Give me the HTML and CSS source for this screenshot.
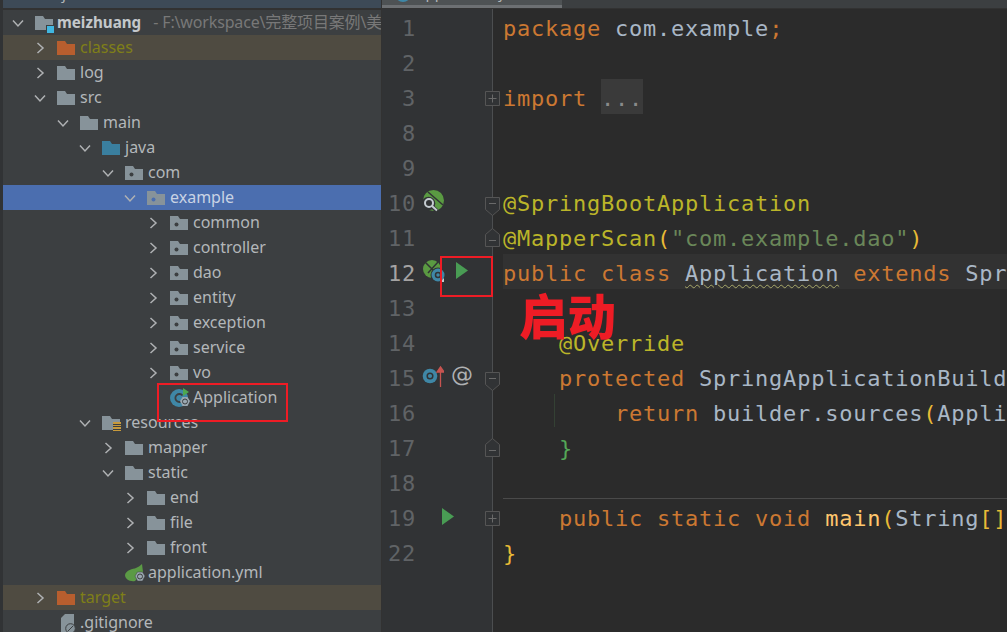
FILE: index.html
```html
<!DOCTYPE html>
<html lang="zh">
<head>
<meta charset="utf-8">
<title>Application</title>
<link rel="stylesheet" href="styles.css">
</head>
<body>
<svg class="defs" width="0" height="0" aria-hidden="true">
  <symbol id="folder" viewBox="0 0 18 14"><path d="M0 0h8l2 3h8v11H0z" fill="currentColor"/></symbol>
  <symbol id="pkg" viewBox="0 0 18 14"><path d="M0 0h8l2 3h8v11H0z" fill="#87939a"/><circle cx="6.500" cy="8.500" r="2" fill="var(--dot,#3c3f41)"/></symbol>
  <symbol id="chev-r" viewBox="0 0 12 12"><path d="M3.500 1l5.500 5-5.500 5" fill="none" stroke="#afb1b3" stroke-width="1.500"/></symbol>
  <symbol id="chev-d" viewBox="0 0 12 12"><path d="M1 3.500l5 5.500 5-5.500" fill="none" stroke="#afb1b3" stroke-width="1.500"/></symbol>
  <symbol id="fold-open" viewBox="0 0 15 19"><path d="M.5.500h14v12l-7 6-7-6z" fill="#313335" stroke="#555"/><path d="M4 6.500h7" stroke="#6a6a6a"/></symbol>
  <symbol id="fold-close" viewBox="0 0 15 19"><path d="M.5 18.500h14v-12l-7-6-7 6z" fill="#313335" stroke="#555"/><path d="M4 12.500h7" stroke="#6a6a6a"/></symbol>
  <symbol id="fold-plus" viewBox="0 0 15 15"><path d="M.5.500h14v14H.5z" fill="#313335" stroke="#555"/><path d="M3.500 7.500h8M7.500 3.500v8" stroke="#6a6a6a"/></symbol>
</svg>
<div class="app">
  <aside class="sidebar">
    <div class="sb-top"><span class="sb-title">Project</span></div>
    <div class="tree">
      <div class="row d0"><svg class="chev"><use href="#chev-d"/></svg><span class="ic"><svg class="folder grey"><use href="#folder"/></svg><i class="module"></i></span><b class="root">meizhuang</b><span class="path">- F:\workspace\完整项目案例\美妆</span></div>
      <div class="row d1 excl"><svg class="chev"><use href="#chev-r"/></svg><svg class="folder orange"><use href="#folder"/></svg><span class="olive">classes</span></div>
      <div class="row d1"><svg class="chev"><use href="#chev-r"/></svg><svg class="folder grey"><use href="#folder"/></svg><span>log</span></div>
      <div class="row d1"><svg class="chev"><use href="#chev-d"/></svg><svg class="folder grey"><use href="#folder"/></svg><span>src</span></div>
      <div class="row d2"><svg class="chev"><use href="#chev-d"/></svg><svg class="folder grey"><use href="#folder"/></svg><span>main</span></div>
      <div class="row d3"><svg class="chev"><use href="#chev-d"/></svg><svg class="folder blue"><use href="#folder"/></svg><span>java</span></div>
      <div class="row d4"><svg class="chev"><use href="#chev-d"/></svg><svg class="folder"><use href="#pkg"/></svg><span>com</span></div>
      <div class="row d5 sel"><svg class="chev"><use href="#chev-d"/></svg><svg class="folder"><use href="#pkg"/></svg><span>example</span></div>
      <div class="row d6"><svg class="chev"><use href="#chev-r"/></svg><svg class="folder"><use href="#pkg"/></svg><span>common</span></div>
      <div class="row d6"><svg class="chev"><use href="#chev-r"/></svg><svg class="folder"><use href="#pkg"/></svg><span>controller</span></div>
      <div class="row d6"><svg class="chev"><use href="#chev-r"/></svg><svg class="folder"><use href="#pkg"/></svg><span>dao</span></div>
      <div class="row d6"><svg class="chev"><use href="#chev-r"/></svg><svg class="folder"><use href="#pkg"/></svg><span>entity</span></div>
      <div class="row d6"><svg class="chev"><use href="#chev-r"/></svg><svg class="folder"><use href="#pkg"/></svg><span>exception</span></div>
      <div class="row d6"><svg class="chev"><use href="#chev-r"/></svg><svg class="folder"><use href="#pkg"/></svg><span>service</span></div>
      <div class="row d6"><svg class="chev"><use href="#chev-r"/></svg><svg class="folder"><use href="#pkg"/></svg><span>vo</span></div>
      <div class="row d6"><span class="chev"></span>
        <svg class="file-ic" viewBox="0 0 20 20"><circle cx="9" cy="10" r="9" fill="#3f87a6"/><path d="M12.500 7.500a4 4 0 1 0 0 5" fill="none" stroke="#3c3f41" stroke-width="1.800"/><path d="M13 0l6 4-6 4z" fill="#4fa84f"/><path d="M12.500 9h5l2.500 4-2.500 5h-5l-2.500-5z" fill="#9aa7b0"/><circle cx="15" cy="13.500" r="2.500" fill="none" stroke="#3c3f41"/></svg>
        <span>Application</span></div>
      <div class="row d3"><svg class="chev"><use href="#chev-d"/></svg><span class="ic"><svg class="folder grey"><use href="#folder"/></svg><i class="res"></i></span><span>resources</span></div>
      <div class="row d4"><svg class="chev"><use href="#chev-r"/></svg><svg class="folder grey"><use href="#folder"/></svg><span>mapper</span></div>
      <div class="row d4"><svg class="chev"><use href="#chev-d"/></svg><svg class="folder grey"><use href="#folder"/></svg><span>static</span></div>
      <div class="row d5"><svg class="chev"><use href="#chev-r"/></svg><svg class="folder grey"><use href="#folder"/></svg><span>end</span></div>
      <div class="row d5"><svg class="chev"><use href="#chev-r"/></svg><svg class="folder grey"><use href="#folder"/></svg><span>file</span></div>
      <div class="row d5"><svg class="chev"><use href="#chev-r"/></svg><svg class="folder grey"><use href="#folder"/></svg><span>front</span></div>
      <div class="row d4"><span class="chev"></span>
        <svg class="file-ic" viewBox="0 0 20 20"><path d="M0 12C1 7 8 6 11 5c2-1 4-2 6-4l1 8-8 9c-5 1-10-2-10-6z" fill="#5b9a45"/><path d="M12.500 9h5l2.500 4-2.500 5h-5l-2.500-5z" fill="#9aa7b0" stroke="#3c3f41" stroke-width=".5"/><circle cx="15" cy="13.500" r="2.500" fill="none" stroke="#3c3f41"/></svg>
        <span>application.yml</span></div>
      <div class="row d1 excl"><svg class="chev"><use href="#chev-r"/></svg><svg class="folder orange"><use href="#folder"/></svg><span class="olive">target</span></div>
      <div class="row d1"><span class="chev"></span>
        <svg class="file-ic" viewBox="0 0 20 20"><path d="M8 1h9v18H4V5z" fill="#87939a"/><circle cx="13.500" cy="15.500" r="4.800" fill="#87939a" stroke="#3c3f41"/><path d="M11 18l5-5" stroke="#3c3f41"/></svg>
        <span>.gitignore</span></div>
    </div>
  </aside>

  <main class="editor">
    <div class="tabs"><div class="tab"><i class="tab-ic"></i><span class="tab-name">Application.java</span></div></div>
    <div class="lines">
      <div class="line"><span class="num">1</span><span class="icons"></span><span class="fold"></span><code class="code"><k>package</k> <t>com.example</t><k>;</k></code></div>
      <div class="line"><span class="num">2</span><span class="icons"></span><span class="fold"></span><code class="code"></code></div>
      <div class="line"><span class="num">3</span><span class="icons"></span><span class="fold"><svg class="fb fb-plus"><use href="#fold-plus"/></svg></span><code class="code"><k>import</k> <span class="dots">...</span></code></div>
      <div class="line"><span class="num">8</span><span class="icons"></span><span class="fold"></span><code class="code"></code></div>
      <div class="line"><span class="num">9</span><span class="icons"></span><span class="fold"></span><code class="code"></code></div>
      <div class="line"><span class="num">10</span><span class="icons">
        <svg class="gi g10" viewBox="0 0 22 22"><circle cx="11.500" cy="10.500" r="10.500" fill="#5a9a42"/><path d="M6 2l15 13" stroke="#313335" stroke-width="1.500"/><circle cx="6.500" cy="13.500" r="6.800" fill="#313335"/><path d="M10 16.500l5 4.500" stroke="#313335" stroke-width="4"/><circle cx="7" cy="13" r="4" fill="none" stroke="#c4cbd0" stroke-width="2"/><path d="M10 16l5 4.500" stroke="#c4cbd0" stroke-width="2"/></svg>
      </span><span class="fold"><svg class="fb fb-open"><use href="#fold-open"/></svg></span><code class="code"><a>@SpringBootApplication</a></code></div>
      <div class="line"><span class="num">11</span><span class="icons"></span><span class="fold"><svg class="fb fb-close"><use href="#fold-close"/></svg></span><code class="code"><a>@MapperScan</a><y>(</y><s>"com.example.dao"</s><y>)</y></code></div>
      <div class="line cur"><span class="num">12</span><span class="icons">
        <svg class="gi g12" viewBox="0 0 24 24"><circle cx="10" cy="10" r="9" fill="#5a9a42"/><path d="M3 3l14 14M16 3L6 14" stroke="#313335" stroke-width="1.500"/><circle cx="16" cy="16" r="7.500" fill="#313335"/><circle cx="16" cy="16" r="6.500" fill="#3f87a6"/><circle cx="16" cy="16" r="2.500" fill="none" stroke="#313335" stroke-width="1.500"/><path d="M18 23l4-4v4z" fill="#c4cbd0"/></svg>
        <svg class="run run12" viewBox="0 0 12 17"><path d="M0 0l12 8.500L0 17z" fill="#499c54"/></svg>
      </span><span class="fold"></span><code class="code"><k>public class</k> <t class="wavy">Application</t> <k>extends</k> <t>SpringBootServletInitializer</t> <y>{</y></code></div>
      <div class="line"><span class="num">13</span><span class="icons"></span><span class="fold"></span><code class="code"></code></div>
      <div class="line"><span class="num">14</span><span class="icons"></span><span class="fold"></span><code class="code">    <a>@Override</a></code></div>
      <div class="line"><span class="num">15</span><span class="icons">
        <svg class="gi g15" viewBox="0 0 22 22"><circle cx="8" cy="11" r="7.300" fill="#3f87a6"/><circle cx="8" cy="11" r="2.800" fill="none" stroke="#313335" stroke-width="1.500"/><path d="M18.500 22V2M15 7l3.500-5L22 7z" fill="#c75450" stroke="#c75450" stroke-width="1.300"/></svg>
        <span class="at">@</span>
      </span><span class="fold"><svg class="fb fb-open"><use href="#fold-open"/></svg></span><code class="code">    <k>protected</k> <t>SpringApplicationBuilder</t></code></div>
      <div class="line"><span class="num">16</span><span class="icons"></span><span class="fold"></span><code class="code indent-guide">        <k>return</k> <t>builder.sources</t><y>(</y><t>Application</t></code></div>
      <div class="line"><span class="num">17</span><span class="icons"></span><span class="fold"><svg class="fb fb-close"><use href="#fold-close"/></svg></span><code class="code">    <g>}</g></code></div>
      <div class="line"><span class="num">18</span><span class="icons"></span><span class="fold"></span><code class="code"></code></div>
      <div class="line sep"><span class="num">19</span><span class="icons icons-mid"><svg class="run run19" viewBox="0 0 12 17"><path d="M0 0l12 8.500L0 17z" fill="#499c54"/></svg></span><span class="fold"><svg class="fb fb-plus"><use href="#fold-plus"/></svg></span><code class="code">    <k>public static void</k> <m>main</m><y>(</y><t>String</t><y>[]</y></code></div>
      <div class="line"><span class="num">22</span><span class="icons"></span><span class="fold"></span><code class="code"><y>}</y></code></div>
    </div>
  </main>
</div>
<div class="mark mark-app"></div>
<div class="mark mark-run"></div>
<div class="callout">启动</div>
</body>
</html>
```

FILE: styles.css
```css
* { box-sizing: border-box; }
html, body { margin: 0; width: 1007px; height: 632px; overflow: hidden; background: #2b2b2b; }
.defs { position: absolute; }

.app { display: flex; height: 632px; }

.sidebar { width: 382px; flex: none; background: #3c3f41; border-left: 3px solid #313335; border-right: 1px solid #323232; display: flex; flex-direction: column; overflow: hidden; font: 16px/25px "Noto Sans", "Noto Sans CJK SC", sans-serif; color: #b3b7ba; }
.sb-top { height: 10px; background: #3d4a57; border-bottom: 2px solid #323232; flex: none; overflow: hidden; padding-left: 35px; }
.sb-title { display: block; margin-top: -19px; color: #b3b7ba; font-size: 15px; }
.tree { flex: none; }
.row { height: 25px; display: flex; align-items: center; white-space: nowrap; }
.row.excl { background: #4f4b41; }
.row.sel { background: #4b6eaf; color: #c9d3e4; --dot: #4b6eaf; }
.d0 { padding-left: 9px; } .d1 { padding-left: 31px; } .d2 { padding-left: 54px; }
.d3 { padding-left: 76px; } .d4 { padding-left: 99px; } .d5 { padding-left: 121px; } .d6 { padding-left: 144px; }
.chev { width: 12px; height: 12px; flex: none; margin-right: 11px; }
.folder { width: 18px; height: 14px; flex: none; margin-right: 5px; display: block; }
.grey { color: #87939a; } .orange { color: #b85e2e; } .blue { color: #3a7f9f; }
.ic { position: relative; display: block; flex: none; }
.module { position: absolute; left: 11px; top: 9px; width: 7px; height: 7px; background: #40b6e0; border: 1px solid #3c3f41; box-sizing: content-box; }
.res { position: absolute; left: 11px; top: 6px; width: 8px; height: 10px; background: repeating-linear-gradient(#c89a3c 0 1.500px, #3c3f41 1.500px 2.500px); }
.root { color: #c4c8cb; font-weight: 700; font-size: 15.200px; margin-left: -1px; }
.path { color: #787878; margin-left: 12px; letter-spacing: -.150px; }
.olive { color: #7f7f18; }
.file-ic { width: 20px; height: 20px; flex: none; margin-right: 3px; }

.editor { flex: 1; min-width: 0; display: flex; flex-direction: column; overflow: hidden; }
.tabs { height: 9px; flex: none; background: #3c3f41; border-bottom: 1px solid #323232; }
.tab { width: 180px; height: 8px; background: #4e5254; border-bottom: 3px solid #6d7073; overflow: hidden; display: flex; align-items: flex-end; padding-left: 13px; font: 15px/20px "Noto Sans", sans-serif; color: #b3b7ba; white-space: nowrap; }
.tab-ic { width: 16px; height: 16px; flex: none; border-radius: 50%; background: #3f87a6; margin: 0 5px 3px 0; }
.tab-name { display: block; margin-bottom: 3px; }
.lines { flex: 1; background: linear-gradient(90deg, #313335 110px, #4c4e50 110px 111px, #2b2b2b 111px); }
.line { height: 35px; display: flex; align-items: center; white-space: pre; font: 22px/35px "DejaVu Sans Mono", monospace; }
.line.cur .code { background: #323232; }
.line.sep .code { box-shadow: 0 -1px 0 #4a4a4a; }
.num { width: 34px; flex: none; padding-top: 4px; text-align: right; color: #606366; letter-spacing: .700px; }
.cur .num { color: #a4a3a3; }
.icons { width: 54px; padding-left: 6px; flex: none; display: flex; align-items: flex-start; height: 100%; }
.icons-mid { padding-left: 26px; }
.gi { flex: none; }
.g10 { width: 22px; height: 22px; margin-top: 6px; }
.g12 { width: 24px; height: 24px; margin-top: 5px; }
.g15 { width: 22px; height: 22px; margin-top: 6px; }
.run { width: 12px; height: 17px; flex: none; }
.run12 { margin: 8px 0 0 10px; }
.run19 { margin-top: 9px; }
.at { font: 22px/35px "DejaVu Sans", sans-serif; color: #afb1b3; margin: -2px 0 0 7px; }
.fold { width: 23px; height: 100%; flex: none; position: relative; z-index: 1; }
.fb { position: absolute; left: 15px; width: 15px; }
.fb-plus { top: 12px; height: 15px; }
.fb-open { top: 13px; height: 19px; }
.fb-close { top: 9px; height: 19px; }
.code { flex: 1; min-width: 0; height: 100%; margin-left: 10px; padding: 2px 0 0 0; font: 22px/35px "DejaVu Sans Mono", monospace; letter-spacing: .760px; color: #a9b7c6; overflow: hidden; position: relative; }
k { color: #cc7832; } t { color: #a9b7c6; } a { color: #bbb529; }
y { color: #e8ba36; } g { color: #54a857; } m { color: #ffc66d; }
s { color: #6a8759; text-decoration: none; }
.wavy { text-decoration: underline wavy #a8a86a 1px; text-underline-offset: 3px; }
.dots { background: #3a3a3a; color: #8a8a8a; padding: 7px 0 3px; }
.indent-guide::before { content: ""; position: absolute; left: 51px; top: 0; bottom: 2px; width: 1px; background: #344134; }

.mark { position: absolute; border: 2px solid #ee1c25; }
.mark-app { left: 157px; top: 383px; width: 131px; height: 39px; }
.mark-run { left: 440px; top: 256px; width: 53px; height: 41px; }
.callout { position: absolute; left: 519px; top: 284px; font: 900 48.500px/60px "Noto Sans CJK SC", sans-serif; color: #ee1c25; }
```
